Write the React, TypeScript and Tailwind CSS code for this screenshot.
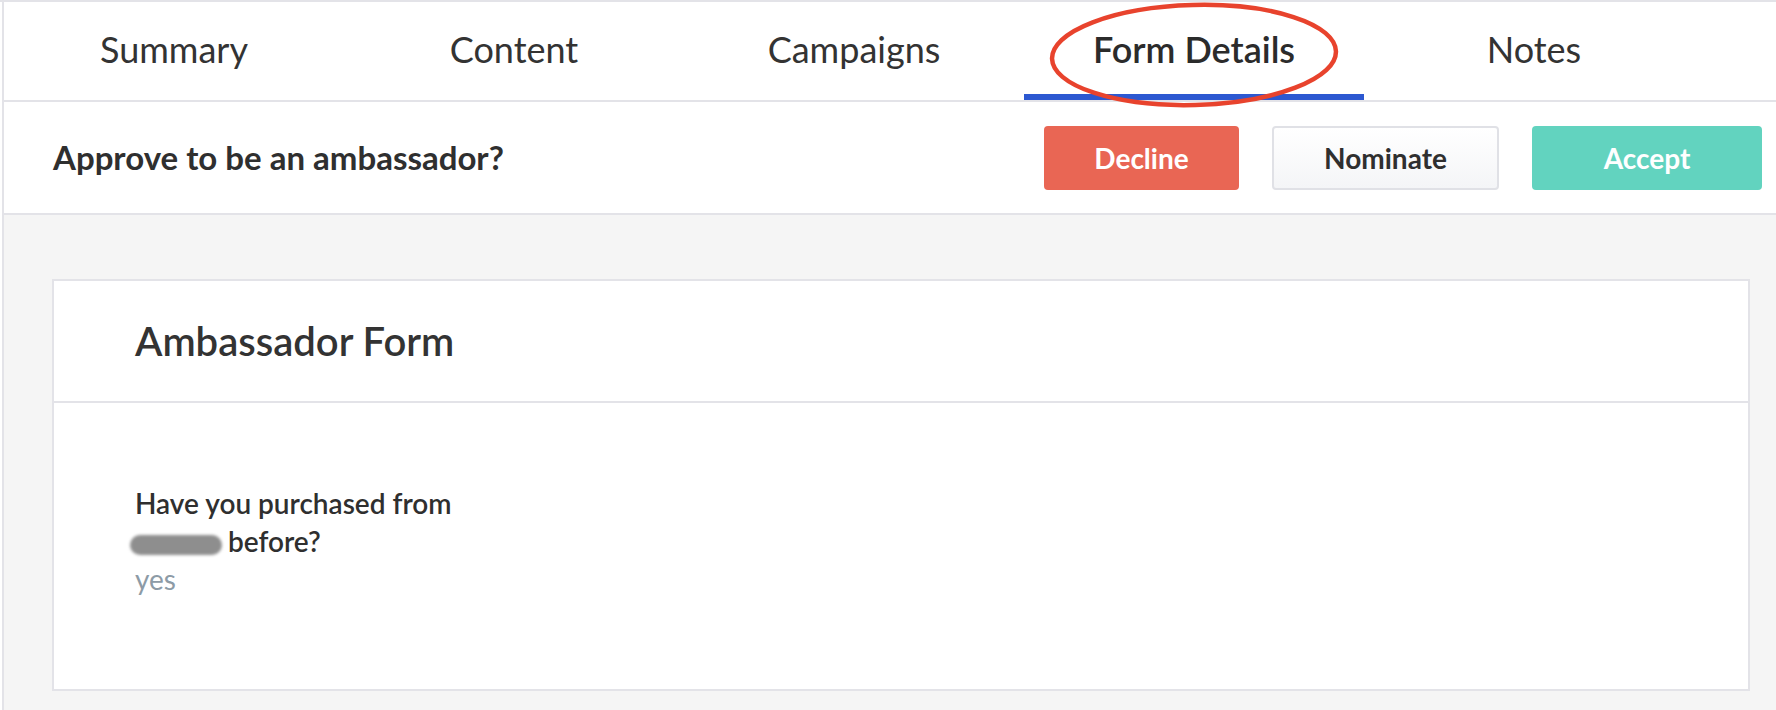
const tabs = ["Summary", "Content", "Campaigns", "Form Details", "Notes"];

function Tab({ label, active }: { label: string; active?: boolean }) {
  return (
    <div className="relative w-[340px] h-full flex items-center justify-center pb-[4px]">
      <span className={active ? "text-[36px] text-[#2b2b2b] font-semibold" : "text-[36px] text-[#333]"}>
        {label}
      </span>
      {active && <div className="absolute left-0 right-0 bottom-0 h-[6px] bg-[#2c58d1]" />}
    </div>
  );
}

export default function App() {
  return (
    <div className="relative w-[1776px] h-[710px] overflow-hidden bg-white border-t-2 border-[#e3e3e8] font-['Lato',sans-serif] text-[#333]">
      <div className="flex h-full pl-[2px]">
        <div className="flex-1 flex flex-col border-l-2 border-[#e3e3e8]">
          {/* tabs */}
          <div className="h-[100px] flex border-b-2 border-[#e3e3e8]">
            {tabs.map((t) => (
              <Tab key={t} label={t} active={t === "Form Details"} />
            ))}
          </div>

          {/* approval bar */}
          <div className="h-[113px] flex items-center pl-[49px] pr-[14px] border-b-2 border-[#e3e3e8]">
            <div className="flex-1 text-[33px] font-bold text-[#2f2f2f]">Approve to be an ambassador?</div>
            <div className="flex gap-[33px]">
              <button className="w-[195px] h-[64px] rounded-[4px] bg-[#e96654] text-white text-[28px] font-bold">
                Decline
              </button>
              <button className="w-[227px] h-[64px] rounded-[4px] border-2 border-[#e0e1e6] bg-gradient-to-b from-white to-[#f4f5f7] text-[#2f2f2f] text-[28px] font-bold">
                Nominate
              </button>
              <button className="w-[230px] h-[64px] rounded-[4px] bg-[#62d3bf] text-white text-[28px] font-bold">
                Accept
              </button>
            </div>
          </div>

          {/* form area */}
          <div className="flex-1 bg-[#f5f5f5] pt-[64px] pl-[48px] pr-[26px]">
            <div className="bg-white border-2 border-[#e3e3e8] h-[412px] flex flex-col">
              <div className="h-[122px] flex items-center pl-[81px] border-b-2 border-[#e3e3e8]">
                <h2 className="text-[40px] font-semibold text-[#333]">Ambassador Form</h2>
              </div>
              <div className="pl-[81px] pt-[81px]">
                <div className="text-[28px] font-semibold leading-[38px] text-[#2f2f2f]">
                  Have you purchased from
                  <br />
                  <span className="inline-block align-middle w-[92px] h-[20px] -ml-[5px] mr-[6px] rounded-full bg-[#8e8e8e] blur-[1.5px]" />
                  before?
                </div>
                <div className="text-[28px] leading-[38px] text-[#8d9ba6]">yes</div>
              </div>
            </div>
          </div>
        </div>
      </div>

      {/* annotation circle */}
      <svg className="absolute left-[1047px] top-0 w-[294px] h-[108px]" viewBox="0 0 294 108" fill="none">
        <ellipse cx="147" cy="53" rx="142" ry="50" stroke="#e8432d" strokeWidth="4.5" transform="rotate(-1.5 147 53)" />
      </svg>
    </div>
  );
}
